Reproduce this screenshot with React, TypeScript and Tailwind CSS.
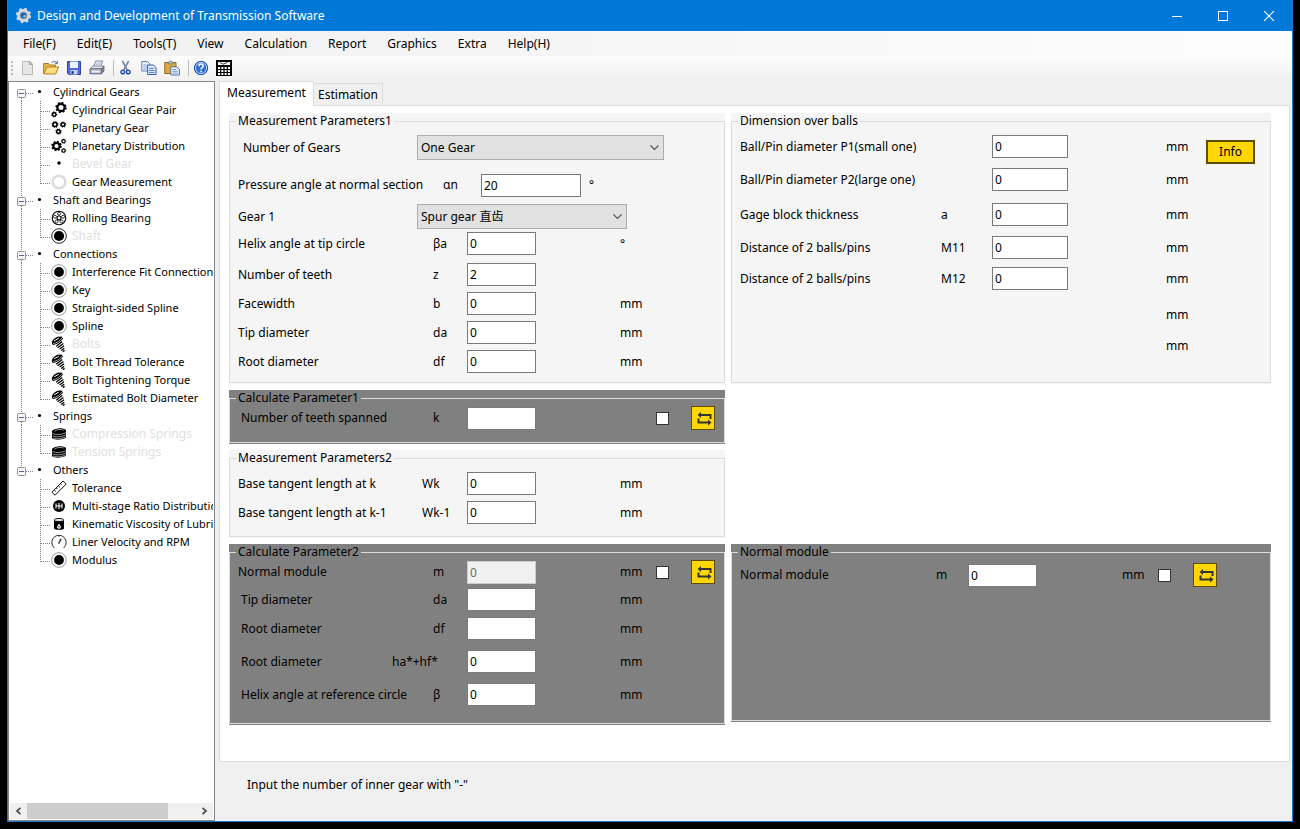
import { useState } from 'react';
import type { ReactNode } from 'react';

/* ---------- small drawings ---------- */

type GearProps = { cx: number; cy: number; r: number; w?: number; color?: string };

function Gear({ cx, cy, r, w = 2, color = '#000' }: GearProps) {
  const teeth = 8;
  const step = (2 * Math.PI * (r + w / 2)) / teeth;
  return (
    <>
      <circle cx={cx} cy={cy} r={r} fill="none" stroke={color} strokeWidth={w} />
      <circle
        cx={cx}
        cy={cy}
        r={r + w / 2}
        fill="none"
        stroke={color}
        strokeWidth={w * 0.9}
        strokeDasharray={`${step / 2} ${step / 2}`}
      />
    </>
  );
}

function TreeIcon({ kind }: { kind: string }) {
  return (
    <svg width="16" height="16" viewBox="0 0 16 16" className="shrink-0" aria-hidden="true">
      {kind === 'pair' && (
        <>
          <Gear cx={10} cy={5.5} r={3.6} w={2.2} />
          <Gear cx={3.2} cy={12.4} r={1.7} w={1.4} />
        </>
      )}
      {kind === 'planet' && (
        <>
          <Gear cx={4} cy={4.5} r={2} w={1.5} />
          <Gear cx={12} cy={4.5} r={1.8} w={1.4} />
          <Gear cx={7.5} cy={11.5} r={1.8} w={1.4} />
        </>
      )}
      {kind === 'distribution' && (
        <>
          <Gear cx={5.5} cy={8} r={3.2} w={2.2} />
          <Gear cx={12.6} cy={3.2} r={1.6} w={1.1} />
          <Gear cx={12.6} cy={12.6} r={1.6} w={1.1} />
        </>
      )}
      {kind === 'dot' && <circle cx="8" cy="7" r="1.7" />}
      {kind === 'ring' && <circle cx="8" cy="8" r="6.3" fill="none" stroke="#dcdcdc" strokeWidth="2.6" />}
      {kind === 'bearing' && (
        <g fill="none" stroke="#000">
          <circle cx="8" cy="8" r="6.8" strokeWidth="1.1" />
          <circle cx="8" cy="8" r="2" strokeWidth="1.1" />
          <circle cx="8" cy="3.7" r="1.5" strokeWidth="0.8" />
          <circle cx="12.1" cy="6.7" r="1.5" strokeWidth="0.8" />
          <circle cx="10.5" cy="11.5" r="1.5" strokeWidth="0.8" />
          <circle cx="5.5" cy="11.5" r="1.5" strokeWidth="0.8" />
          <circle cx="3.9" cy="6.7" r="1.5" strokeWidth="0.8" />
        </g>
      )}
      {kind === 'shaft' && (
        <>
          <circle cx="8" cy="8" r="7.3" fill="none" stroke="#222" strokeWidth="1" />
          <circle cx="8" cy="8" r="5.1" />
        </>
      )}
      {kind === 'disc' && (
        <>
          <circle cx="8" cy="8" r="7.3" fill="none" stroke="#999" strokeWidth="1" />
          <circle cx="8" cy="8" r="4.9" />
        </>
      )}
      {kind === 'bolt' && (
        <>
          <path d="M0.8 7.2 C0.8 4.4 3 2.2 6.5 0.8 L10.5 0.5 L12 2.6 C9.6 6.2 5.4 8.8 1.8 9Z" />
          <path d="M3.2 4.8 L7.8 2.2" stroke="#fff" strokeWidth="1" />
          <path d="M2 7.6 C6 7 9 4.8 11 2" stroke="#fff" strokeWidth="0.6" fill="none" />
          <path
            d="M5.2 10.2 L11.2 5.4 M6.6 11.8 L12.4 7.4 M8.6 13 L13 9.8 M10.2 14.4 L13.2 12.2 M11.8 15.6 L13.6 14.4"
            stroke="#000"
            strokeWidth="1.3"
          />
        </>
      )}
      {kind === 'spring' && (
        <>
          <path d="M1 4.8 V12 C3 14.6 12 14 15 11.5 V4 C12 1.4 4 2 1 4.8Z" />
          <g fill="none" stroke="#fff" strokeWidth="0.6">
            <path d="M3.4 5.4 C5 3.4 10 2.8 12.6 4" />
            <path d="M1.5 7.4 C5 9.2 11 8.6 15 6.6 M1.5 9.8 C5 11.6 11 11 15 8.8 M2.4 12.2 C6 13.4 11 12.8 14.4 11" />
          </g>
        </>
      )}
      {kind === 'ruler' && (
        <g fill="none" stroke="#111" strokeWidth="1">
          <path d="M0.9 12.2 L12 1 L15.2 4 L4.1 15.2Z" />
          <path d="M3.2 10 L4.8 11.6 M5.3 7.9 L6.4 9 M7.4 5.8 L9 7.4 M9.5 3.6 L10.6 4.7" />
        </g>
      )}
      {kind === 'ratio' && (
        <>
          <circle cx="8" cy="8" r="6" />
          <path d="M5 5.5 V10.5 M8 4.8 V11.2 M11 5.5 V10.5 M5 8 H11" stroke="#fff" strokeWidth="1.1" />
        </>
      )}
      {kind === 'oil' && (
        <>
          <path d="M3 3.5 H13 V12.5 C13 14.3 3 14.3 3 12.5Z" />
          <ellipse cx="8" cy="4" rx="4.6" ry="1.5" fill="#fff" stroke="#000" />
          <path d="M8 7.6 L9.8 10.4 A1.9 1.9 0 1 1 6.2 10.4Z" fill="#fff" />
          <circle cx="8" cy="10.8" r="0.7" />
        </>
      )}
      {kind === 'gauge' && (
        <g fill="none" stroke="#333" strokeWidth="1">
          <path d="M3.4 14 A7.2 7.2 0 1 1 12.6 14" />
          <path d="M7.6 9.6 L10.2 4.6" strokeWidth="1.3" />
          <path d="M8 1.4 V2.8" />
        </g>
      )}
    </svg>
  );
}

function ToolIcon({ kind }: { kind: string }) {
  return (
    <svg width="16" height="16" viewBox="0 0 16 16" aria-hidden="true">
      {kind === 'New' && (
        <>
          <path d="M2.5 1.5 H10 L12.5 4 V14.5 H2.5Z" fill="#e6e6e6" stroke="#b9b9b9" />
          <path d="M9.5 1.5 V4.5 H12.5Z" fill="#cfcfcf" stroke="#a8a8a8" />
        </>
      )}
      {kind === 'Open' && (
        <>
          <path d="M0.7 13.5 V3.5 H5.5 L6.8 5 H12.5 V13.5Z" fill="#e6b84c" stroke="#a87a1f" />
          <path d="M0.8 14 L3.8 7 H15.6 L12.6 14Z" fill="#fbdc80" stroke="#b58320" />
          <path d="M8.5 2.8 C10 0.8 13 0.8 14 3.2 M14.6 0.9 L14.2 3.8 L11.6 3" fill="none" stroke="#56749c" />
        </>
      )}
      {kind === 'Save' && (
        <>
          <path d="M1.5 1.5 H14.5 V14.5 H2.8 L1.5 13.2Z" fill="#5468d8" stroke="#2f43a8" />
          <path d="M4 1.5 H12 V8 H4Z" fill="#eef2ff" />
          <path d="M4.5 10 H11.5 V14.5 H4.5Z" fill="#c9d2ea" />
          <path d="M5.5 11 H7.6 V14 H5.5Z" fill="#263a9a" />
        </>
      )}
      {kind === 'Print' && (
        <>
          <path d="M4.8 6.5 L6.8 1 H13.6 L11.8 6.5Z" fill="#fff" stroke="#7a8698" />
          <path d="M7.3 3 H12 M6.7 4.8 H11.4" stroke="#8ea3c4" strokeWidth="0.8" />
          <path d="M1 8.8 L4 6 H15 L12.5 8.8Z" fill="#dfe3ea" stroke="#7b8490" strokeWidth="0.8" />
          <path d="M1 8.8 H12.5 V13.8 H1Z" fill="#b8c0cc" stroke="#5d6773" />
          <path d="M12.5 8.8 L15 6 V11 L12.5 13.8Z" fill="#7d8794" stroke="#5d6773" strokeWidth="0.8" />
          <path d="M3 11.6 H10.5" stroke="#f4f6f9" strokeWidth="1.4" />
        </>
      )}
      {kind === 'Cut' && (
        <g fill="none">
          <path d="M4.4 1 L9.2 10 M10.6 1 L5.8 10" stroke="#7288a8" strokeWidth="1.6" />
          <circle cx="4.8" cy="12" r="1.8" stroke="#2a4fb5" strokeWidth="1.5" />
          <circle cx="10.2" cy="12" r="1.8" stroke="#2a4fb5" strokeWidth="1.5" />
        </g>
      )}
      {kind === 'Copy' && (
        <>
          <path d="M0.8 1.5 H6.5 L8.8 3.8 V11 H0.8Z" fill="#eef4ff" stroke="#5c80c0" />
          <path d="M2.3 5 H6.5 M2.3 7 H6.5 M2.3 9 H6.5" stroke="#6f97dd" strokeWidth="0.8" />
          <path d="M6.6 5 H12.4 L15 7.6 V14.5 H6.6Z" fill="#d9e6ff" stroke="#3c62ad" />
          <path d="M8.2 8.5 H12.5 M8.2 10.5 H13.4 M8.2 12.5 H13.4" stroke="#4c78cd" strokeWidth="0.9" />
        </>
      )}
      {kind === 'Paste' && (
        <>
          <path d="M0.8 2.5 H12 V13.5 H0.8Z" fill="#e2a83b" stroke="#95661a" />
          <path d="M4 3.8 V2.2 H5.4 C5.4 0.4 7.8 0.4 7.8 2.2 H9.2 V3.8Z" fill="#cfd3da" stroke="#6f6f6f" strokeWidth="0.8" />
          <path d="M6.8 6.8 H12.4 L15.4 9.4 V15 H6.8Z" fill="#eef4ff" stroke="#4d6ea8" />
          <path d="M8.4 9.5 H12.2 M8.4 11.3 H13.8 M8.4 13.1 H13.8" stroke="#5c82c8" strokeWidth="0.8" />
        </>
      )}
      {kind === 'Help' && (
        <>
          <circle cx="8" cy="8" r="6.7" fill="#2f6fd6" stroke="#1c4ea8" />
          <circle cx="8" cy="8" r="5.6" fill="none" stroke="#cfe0fa" strokeWidth="0.9" />
          <path
            d="M5.9 6.2 C5.9 3.4 10.2 3.5 10.2 6 C10.2 7.6 8 7.7 8 9.4 M8 10.7 V12.2"
            fill="none"
            stroke="#fff"
            strokeWidth="1.5"
          />
        </>
      )}
      {kind === 'Calculator' && (
        <>
          <path d="M0 0 H16 V16 H0Z" />
          <path d="M2 2 H14 V5 H2Z" fill="#fff" />
          <path d="M4 2.6 L7 4.2 L11.5 2.4" fill="none" stroke="#000" strokeWidth="0.8" />
          <path
            d="M2 8 H14 M2 11 H14 M2 14 H14"
            stroke="#fff"
            strokeWidth="2"
            strokeDasharray="2.1 1.2"
          />
        </>
      )}
    </svg>
  );
}

function Chevron() {
  return (
    <svg
      width="11"
      height="7"
      viewBox="0 0 11 7"
      className="pointer-events-none absolute top-1/2 right-1 -translate-y-1/2"
      aria-hidden="true"
    >
      <path d="M1.5 1 L5.5 5 L9.5 1" fill="none" stroke="#555" strokeWidth="1.1" />
    </svg>
  );
}

/* ---------- navigation tree ---------- */

type Leaf = { name: string; icon: string; off?: boolean };

const TREE: { name: string; items: Leaf[] }[] = [
  {
    name: 'Cylindrical Gears',
    items: [
      { name: 'Cylindrical Gear Pair', icon: 'pair' },
      { name: 'Planetary Gear', icon: 'planet' },
      { name: 'Planetary Distribution', icon: 'distribution' },
      { name: 'Bevel Gear', icon: 'dot', off: true },
      { name: 'Gear Measurement', icon: 'ring' },
    ],
  },
  {
    name: 'Shaft and Bearings',
    items: [
      { name: 'Rolling Bearing', icon: 'bearing' },
      { name: 'Shaft', icon: 'shaft', off: true },
    ],
  },
  {
    name: 'Connections',
    items: [
      { name: 'Interference Fit Connection', icon: 'disc' },
      { name: 'Key', icon: 'disc' },
      { name: 'Straight-sided Spline', icon: 'disc' },
      { name: 'Spline', icon: 'disc' },
      { name: 'Bolts', icon: 'bolt', off: true },
      { name: 'Bolt Thread Tolerance', icon: 'bolt' },
      { name: 'Bolt Tightening Torque', icon: 'bolt' },
      { name: 'Estimated Bolt Diameter', icon: 'bolt' },
    ],
  },
  {
    name: 'Springs',
    items: [
      { name: 'Compression Springs', icon: 'spring', off: true },
      { name: 'Tension Springs', icon: 'spring', off: true },
    ],
  },
  {
    name: 'Others',
    items: [
      { name: 'Tolerance', icon: 'ruler' },
      { name: 'Multi-stage Ratio Distribution', icon: 'ratio' },
      { name: 'Kinematic Viscosity of Lubricant', icon: 'oil' },
      { name: 'Liner Velocity and RPM', icon: 'gauge' },
      { name: 'Modulus', icon: 'disc' },
    ],
  },
];

function Tree() {
  const [closed, setClosed] = useState<string[]>([]);
  const toggle = (n: string) =>
    setClosed((c) => (c.includes(n) ? c.filter((x) => x !== n) : [...c, n]));
  return (
    <ul className="mr-px min-h-0 flex-1 overflow-hidden pt-px text-[11px] leading-[18px] whitespace-nowrap">
      {TREE.map((cat, ci) => {
        const first = ci === 0;
        const last = ci === TREE.length - 1;
        const open = !closed.includes(cat.name);
        return (
          <li key={cat.name}>
            <button
              type="button"
              aria-expanded={open}
              onClick={() => toggle(cat.name)}
              className="flex h-[18px] items-center"
            >
              <svg width="44" height="18" viewBox="0 0 44 18" className="shrink-0" aria-hidden="true">
                <g stroke="#808080" strokeDasharray="1 1">
                  {!first && <path d="M12.5 0 V6" />}
                  {!last && <path d="M12.5 15 V18" />}
                  <path d="M17 10.5 H24" />
                </g>
                <rect x="8.5" y="6.5" width="8" height="8" rx="1" fill="#f6f6f6" stroke="#919191" />
                <path d={open ? 'M10 10.5 H15' : 'M10 10.5 H15 M12.5 8 V13'} stroke="#4b63a7" />
                <circle cx="30.5" cy="8.5" r="1.6" />
              </svg>
              {cat.name}
            </button>
            {open && (
              <ul>
                {cat.items.map((it, i) => (
                  <li key={it.name}>
                    <button
                      type="button"
                      disabled={it.off}
                      className="flex h-[18px] items-center text-black disabled:text-[12px] disabled:text-[#e0e0e0]"
                    >
                      <svg width="42" height="18" viewBox="0 0 42 18" className="shrink-0" aria-hidden="true">
                        <g stroke="#808080" strokeDasharray="1 1">
                          {!last && <path d="M12.5 0 V18" />}
                          <path d={i === cat.items.length - 1 ? 'M31.5 0 V11' : 'M31.5 0 V18'} />
                          <path d="M32 10.5 H42" />
                        </g>
                      </svg>
                      <TreeIcon kind={it.icon} />
                      <span className="pl-[5px]">{it.name}</span>
                    </button>
                  </li>
                ))}
              </ul>
            )}
          </li>
        );
      })}
    </ul>
  );
}

/* ---------- form parts ---------- */

function Group({
  title,
  dark,
  className = '',
  children,
}: {
  title: string;
  dark?: boolean;
  className?: string;
  children: ReactNode;
}) {
  return (
    <div className={`flex flex-col pb-px ${dark ? 'bg-[#808080]' : 'bg-[#f5f5f5]'} ${className}`}>
      <fieldset className="min-w-0 flex-1 border border-[#dcdcdc]">
        <legend className="ml-[6px] h-4 px-[2px] leading-4">{title}</legend>
        {children}
      </fieldset>
    </div>
  );
}

function Field({
  label,
  value,
  className = '',
  disabled,
}: {
  label: string;
  value: string;
  className?: string;
  disabled?: boolean;
}) {
  return (
    <input
      type="text"
      aria-label={label}
      defaultValue={value}
      disabled={disabled}
      className={`h-[23px] border border-[#7a7a7a] bg-white px-[2px] disabled:border-[#cccccc] disabled:bg-[#f0f0f0] disabled:text-[#6d6d6d] ${className}`}
    />
  );
}

function CheckAndRun({ label }: { label: string }) {
  return (
    <>
      <input
        type="checkbox"
        aria-label={`Use ${label}`}
        className="size-[13px] appearance-none border border-[#333] bg-white checked:bg-[#333]"
      />
      <button
        type="button"
        aria-label={`Calculate ${label}`}
        className="flex size-6 items-center justify-center border border-[#5c4d00] bg-[#ffd700]"
      >
        <svg width="22" height="22" viewBox="0 0 22 22" aria-hidden="true">
          <path d="M8 8 H18.5 V12 M16 15.5 H6.5 V11.5" fill="none" stroke="#333" strokeWidth="2" />
          <path d="M9 5 V11 L5.6 8Z M16 12.5 V18.5 L19.6 15.5Z" fill="#333" />
        </svg>
      </button>
    </>
  );
}

const LEFT =
  'grid grid-cols-[194px_35px_minmax(104px,1fr)_36px_35px_24px] items-center pr-[9px] pl-2';

function LeftRow({
  label,
  sym,
  value,
  unit,
  run,
  disabled,
  h = 'h-[29px]',
  indent,
  wideSym,
}: {
  label: string;
  sym: string;
  value: string;
  unit?: string;
  run?: boolean;
  disabled?: boolean;
  h?: string;
  indent?: boolean;
  wideSym?: string;
}) {
  return (
    <div className={`${LEFT} ${h}`}>
      <span className={indent ? 'pl-[3px]' : ''}>{label}</span>
      <span className={`whitespace-nowrap ${wideSym ?? 'pl-[1px]'}`}>{sym}</span>
      <Field label={label} value={value} disabled={disabled} className="w-[69px]" />
      <span>{unit}</span>
      {run && <CheckAndRun label={label} />}
    </div>
  );
}

const RIGHT = 'grid grid-cols-[201px_51px_minmax(80px,1fr)_40px] items-center';

function RightRow({
  label,
  sym,
  h = 'h-[33px]',
}: {
  label?: string;
  sym?: string;
  h?: string;
}) {
  return (
    <div className={`${RIGHT} ${h}`}>
      <span>{label}</span>
      <span>{sym}</span>
      {label ? <Field label={label} value="0" className="w-[76px]" /> : <span />}
      <span>mm</span>
    </div>
  );
}

function Picker({ label, value, className }: { label: string; value: string; className: string }) {
  return (
    <span className={`relative block ${className}`}>
      <select
        aria-label={label}
        className="h-[25px] w-full appearance-none border border-[#adadad] bg-[#e1e1e1] pr-5 pl-[3px]"
      >
        <option>{value}</option>
      </select>
      <Chevron />
    </span>
  );
}

/* ---------- application ---------- */

const MENU = ['File(F)', 'Edit(E)', 'Tools(T)', 'View', 'Calculation', 'Report', 'Graphics', 'Extra', 'Help(H)'];
const TOOLS = ['New', 'Open', 'Save', 'Print', '|', 'Cut', 'Copy', 'Paste', '|', 'Help', 'Calculator'];

export default function App() {
  return (
    <div className="flex min-h-screen flex-col bg-black px-[7px] pb-[7px] font-['Noto_Sans','Noto_Sans_CJK_SC',sans-serif] text-[12px] leading-4 text-black">
      <div className="flex flex-1 flex-col border-x border-b border-[#1a7ad0] bg-[#f0f0f0]">
        <header className="flex h-[31px] items-center bg-[#0078d7] pl-2 text-white">
          <svg width="16" height="16" viewBox="0 0 16 16" className="shrink-0" aria-hidden="true">
            <Gear cx={7.5} cy={7.5} r={5} w={2.8} color="#d5dbe0" />
            <circle cx="7.5" cy="7.5" r="3.2" fill="#1763a8" stroke="#8d9aa5" />
            <circle cx="8.5" cy="8.2" r="1.3" fill="#9fb9cc" />
          </svg>
          <h1 className="flex-1 pl-[5px]">Design and Development of Transmission Software</h1>
          <button type="button" aria-label="Minimize" className="flex h-full w-[46px] items-center justify-center">
            <svg width="10" height="10" viewBox="0 0 10 10" aria-hidden="true">
              <path d="M0 5.5 H10" stroke="#fff" />
            </svg>
          </button>
          <button type="button" aria-label="Maximize" className="flex h-full w-[46px] items-center justify-center">
            <svg width="10" height="10" viewBox="0 0 10 10" aria-hidden="true">
              <rect x="0.5" y="0.5" width="9" height="9" fill="none" stroke="#fff" />
            </svg>
          </button>
          <button type="button" aria-label="Close" className="flex h-full w-[46px] items-center justify-center">
            <svg width="10" height="10" viewBox="0 0 10 10" aria-hidden="true">
              <path d="M0 0 L10 10 M10 0 L0 10" stroke="#fff" strokeWidth="1.1" />
            </svg>
          </button>
        </header>

        <nav
          aria-label="Main menu"
          className="flex h-[25px] items-center gap-[21px] bg-linear-to-r from-[#f0f0f0] to-[#fdfdfd] pl-[15px]"
        >
          {MENU.map((m) => (
            <button type="button" key={m}>
              {m}
            </button>
          ))}
        </nav>

        <div
          role="toolbar"
          aria-label="Tools"
          className="flex h-[25px] items-center bg-linear-to-b from-[#fdfdfd] to-[#f0f0f0] pb-[2px]"
        >
          <svg width="8" height="16" viewBox="0 0 8 16" aria-hidden="true">
            <path d="M4 1 V16" stroke="#bdbdbd" strokeWidth="2" strokeDasharray="2 2" />
          </svg>
          {TOOLS.map((t, i) =>
            t === '|' ? (
              <span key={i} className="flex w-[6px] justify-end">
                <span className="h-4 w-px bg-[#bdbdbd]" />
              </span>
            ) : (
              <button type="button" key={t} aria-label={t} className="flex w-[23px] justify-center">
                <ToolIcon kind={t} />
              </button>
            ),
          )}
        </div>

        <div className="flex flex-1">
          <aside className="flex w-[207px] shrink-0 flex-col border border-[#828790] bg-white">
            <Tree />
            <div className="mx-px mb-px flex h-4 shrink-0 bg-[#f0f0f0]">
              <button type="button" aria-label="Scroll left" className="flex w-[17px] items-center justify-center">
                <svg width="7" height="8" viewBox="0 0 7 8" aria-hidden="true">
                  <path d="M5.5 0.8 L2 4 L5.5 7.2" fill="none" stroke="#505050" strokeWidth="1.8" />
                </svg>
              </button>
              <div className="flex-1">
                <div className="h-full w-5/6 bg-[#cdcdcd]" />
              </div>
              <button type="button" aria-label="Scroll right" className="flex w-[17px] items-center justify-center">
                <svg width="7" height="8" viewBox="0 0 7 8" aria-hidden="true">
                  <path d="M1.5 0.8 L5 4 L1.5 7.2" fill="none" stroke="#505050" strokeWidth="1.8" />
                </svg>
              </button>
            </div>
          </aside>

          <main className="flex min-w-0 flex-1 flex-col pr-[2px] pl-1">
            <div role="tablist" className="flex h-6 items-end">
              <button
                type="button"
                role="tab"
                aria-selected="true"
                className="z-10 -mb-px h-[25px] w-[95px] border border-b-0 border-[#dcdcdc] bg-white pb-[2px]"
              >
                Measurement
              </button>
              <button
                type="button"
                role="tab"
                aria-selected="false"
                className="h-[22px] w-[69px] border border-b-0 border-l-0 border-[#dcdcdc]"
              >
                Estimation
              </button>
            </div>

            <div
              role="tabpanel"
              className="grid flex-1 grid-cols-[minmax(0,496fr)_minmax(0,540fr)] content-start gap-[6px] border border-[#dcdcdc] bg-white pt-[7px] pr-[18px] pb-9 pl-[9px]"
            >
              <Group title="Measurement Parameters1" className="min-h-[271px]">
                <div className="flex h-[37px] items-center pl-[13px]">
                  <span className="w-[174px]">Number of Gears</span>
                  <Picker label="Number of Gears" value="One Gear" className="w-[247px]" />
                </div>
                <div className="flex h-[38px] items-center pl-2">
                  <span className="w-[205px]">Pressure angle at normal section</span>
                  <span className="w-[38px]">αn</span>
                  <Field label="Pressure angle at normal section" value="20" className="w-[100px]" />
                  <span className="pl-2">°</span>
                </div>
                <div className="flex h-[25px] items-center pl-2">
                  <span className="w-[179px]">Gear 1</span>
                  <Picker label="Gear 1" value="Spur gear 直齿" className="w-[210px]" />
                </div>
                <LeftRow label="Helix angle at tip circle" sym="βa" value="0" unit="°" />
                <div className="mt-0.5">
                  <LeftRow label="Number of teeth" sym="z" value="2" />
                  <LeftRow label="Facewidth" sym="b" value="0" unit="mm" />
                  <LeftRow label="Tip diameter" sym="da" value="0" unit="mm" />
                  <LeftRow label="Root diameter" sym="df" value="0" unit="mm" />
                </div>
              </Group>

              <Group title="Dimension over balls" className="min-h-[271px]">
                <div className="flex items-start pr-[15px] pl-2">
                  <div className="min-w-0 flex-1 pt-px">
                    <RightRow label="Ball/Pin diameter P1(small one)" />
                    <RightRow label="Ball/Pin diameter P2(large one)" />
                    <div className="mt-0.5">
                      <RightRow label="Gage block thickness" sym="a" />
                      <RightRow label="Distance of 2 balls/pins" sym="M11" />
                      <RightRow label="Distance of 2 balls/pins" sym="M12" h="h-[29px]" />
                    </div>
                    <div className="mt-1.5">
                      <RightRow h="h-[31px]" />
                      <RightRow h="h-[31px]" />
                    </div>
                  </div>
                  <button
                    type="button"
                    className="mt-[11px] h-6 w-[49px] border-2 border-[#5c4d00] bg-[#ffd700] leading-5"
                  >
                    Info
                  </button>
                </div>
              </Group>

              <Group title="Calculate Parameter1" dark className="col-start-1 min-h-[54px]">
                <LeftRow indent label="Number of teeth spanned" sym="k" value="" run h="h-6" />
              </Group>

              <Group title="Measurement Parameters2" className="col-start-1 min-h-[88px]">
                <div className="pt-[3px]">
                  <LeftRow label="Base tangent length at k" sym="Wk" wideSym="-ml-[10px]" value="0" unit="mm" />
                  <LeftRow label="Base tangent length at k-1" sym="Wk-1" wideSym="-ml-[10px]" value="0" unit="mm" />
                </div>
              </Group>

              <Group title="Calculate Parameter2" dark className="col-start-1 min-h-[181px]">
                <LeftRow label="Normal module" sym="m" value="0" unit="mm" run disabled h="h-[22px]" />
                <div className="mt-[3px]">
                  <LeftRow indent label="Tip diameter" sym="da" value="" unit="mm" />
                  <LeftRow indent label="Root diameter" sym="df" value="" unit="mm" />
                </div>
                <div className="mt-0.5">
                  <LeftRow
                    indent
                    label="Root diameter"
                    sym="ha*+hf*"
                    wideSym="-ml-[40px]"
                    value="0"
                    unit="mm"
                    h="h-[33px]"
                  />
                  <LeftRow indent label="Helix angle at reference circle" sym="β" value="0" unit="mm" h="h-[33px]" />
                </div>
              </Group>

              <Group title="Normal module" dark className="col-start-2 min-h-[178px] self-start">
                <div className="grid h-[30px] grid-cols-[196px_32px_minmax(80px,1fr)_36px_35px_24px] items-center pr-[53px] pl-2">
                  <span>Normal module</span>
                  <span>m</span>
                  <Field label="Normal module" value="0" className="w-[69px]" />
                  <span>mm</span>
                  <CheckAndRun label="Normal module" />
                </div>
              </Group>
            </div>

            <footer className="flex h-[59px] items-center pb-3.5 pl-7">Input the number of inner gear with "-"</footer>
          </main>
        </div>
      </div>
    </div>
  );
}
